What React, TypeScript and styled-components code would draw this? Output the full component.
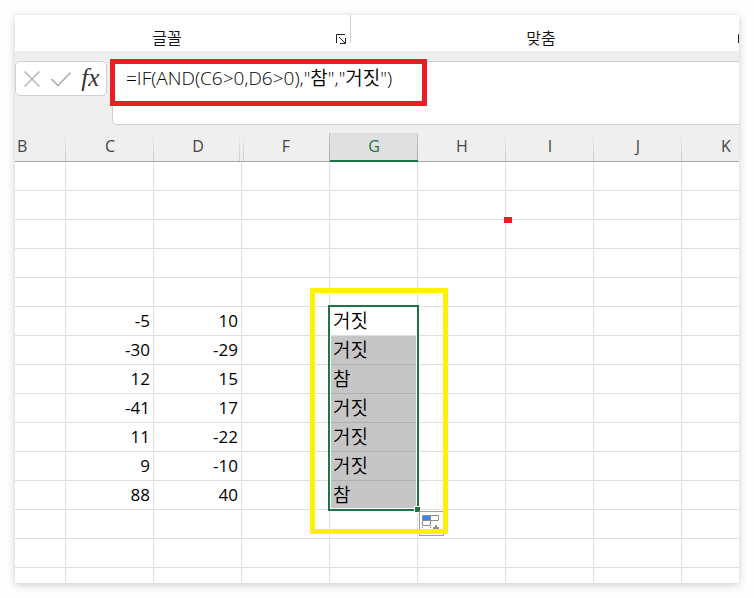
import React from "react";
import styled, { createGlobalStyle, css } from "styled-components";

const GlobalStyle = createGlobalStyle`
  * { box-sizing: border-box; }
  body {
    margin: 0;
    background: #fefefe;
    font-family: "Open Sans", "Noto Sans CJK KR", sans-serif;
    color: #222;
  }
`;

const Page = styled.main`
  padding: 15px;
`;

const Window = styled.div`
  overflow: hidden;
  background: #fff;
  border-radius: 2px;
  box-shadow: 0 2px 8px rgba(0, 0, 0, 0.2);
`;

const Ribbon = styled.div`
  display: flex;
  height: 36px;
  overflow: hidden;
`;

const RibbonGroup = styled.section<{ $fill?: boolean }>`
  display: flex;
  align-items: flex-end;
  height: 28px;
  ${(p) =>
    p.$fill
      ? css`
          flex: 1;
          padding-right: 7px;
          margin-right: -16px;
        `
      : css`
          flex: none;
          width: 336px;
          padding-right: 4px;
          border-right: 1px solid #d0d0d0;
        `}
`;

const GroupLabel = styled.h2<{ $inset: number }>`
  flex: 1;
  margin: 0;
  padding-right: ${(p) => p.$inset}px;
  color: #111;
  font-size: 16px;
  font-weight: 350;
  line-height: 10px;
  text-align: center;
`;

const Launcher = styled.button`
  display: block;
  width: 10px;
  height: 10px;
  margin-bottom: -1px;
  padding: 0;
  border: 0;
  background: none;

  svg { display: block; }
`;

const FormulaBar = styled.div`
  position: relative;
  display: flex;
  align-items: flex-start;
  gap: 5px;
  height: 82px;
  padding-top: 10px;
  background: #efefef;
`;

const FormulaTools = styled.div`
  display: flex;
  align-items: center;
  width: 92px;
  height: 35px;
  padding: 0 1px;
  border: 1px solid #d0d0d0;
  border-radius: 5px;
  background: #fff;
`;

const ToolButton = styled.button`
  display: flex;
  flex: 1;
  align-items: center;
  justify-content: center;
  height: 100%;
  padding: 0;
  border: 0;
  background: none;
`;

const FunctionMark = styled.span`
  padding-bottom: 3px;
  font: italic 400 25px/25px "Liberation Serif", serif;
  color: #333;
`;

const FormulaInput = styled.textarea`
  flex: 1;
  height: 64px;
  padding: 4px 13px;
  border: 1px solid #d0d0d0;
  border-right: 0;
  border-radius: 5px 0 0 5px;
  outline: 0;
  resize: none;
  background: #fff;
  color: #000;
  font: 350 19px/24px "Open Sans", "Noto Sans CJK KR", sans-serif;
`;

const FormulaFrame = styled.div`
  position: absolute;
  top: 8px;
  left: 95px;
  width: 317px;
  height: 47px;
  border: 5px solid #f01c24;
  pointer-events: none;
`;

const SheetView = styled.div`
  height: 450px;
  overflow: hidden;
`;

const Sheet = styled.table`
  width: 755px;
  table-layout: fixed;
  border-collapse: separate;
  border-spacing: 0;
`;

const Column = styled.col<{ $first?: boolean }>`
  width: ${(p) => (p.$first ? 51 : 88)}px;
`;

const fade = "linear-gradient(#efefef, #cacaca)";

const ColumnHead = styled.th<{ $mode: "plain" | "first" | "selected" | "beforeHidden" | "afterHidden" }>`
  height: 29px;
  padding: 0 0 2px;
  border-bottom: 1px solid #a6a6a6;
  background: ${fade} right / 1px 100% no-repeat #efefef;
  color: #444;
  font-size: 16px;
  font-weight: 400;
  line-height: 24px;
  text-align: center;
  ${(p) => p.$mode === "first" && css`
    padding-left: 2px;
    text-align: left;
  `}
  ${(p) => p.$mode === "beforeHidden" && css`
    background: ${fade} right 2px top / 1px 100% no-repeat #efefef;
  `}
  ${(p) => p.$mode === "afterHidden" && css`
    background:
      ${fade} 1px 0 / 1px 100% no-repeat,
      linear-gradient(#c6c6c6, #a6a6a6) right / 1px 100% no-repeat #efefef;
  `}
  ${(p) => p.$mode === "selected" && css`
    padding-bottom: 1px;
    border-bottom: 2px solid #217346;
    background: linear-gradient(#c6c6c6, #a6a6a6) right / 1px 100% no-repeat #e0e0e0;
    color: #217346;
  `}
`;

const Cell = styled.td<{ $kind: "text" | "number"; $shaded: boolean }>`
  position: relative;
  height: 29px;
  padding: 0 3px;
  border-right: 1px solid ${(p) => (p.$shaded ? "#e0e0e0" : "#dedede")};
  border-bottom: 1px solid ${(p) => (p.$shaded ? "#b0b0b0" : "#dedede")};
  background: ${(p) => (p.$shaded ? "#c6c6c6" : "#fff")};
  color: #000;
  font-size: ${(p) => (p.$kind === "text" ? 19 : 17)}px;
  font-weight: ${(p) => (p.$kind === "text" ? 350 : 400)};
  line-height: 28px;
  text-align: ${(p) => (p.$kind === "text" ? "left" : "right")};
  white-space: nowrap;
`;

const Selection = styled.div`
  position: absolute;
  z-index: 1;
  top: -2px;
  left: -2px;
  width: 91px;
  height: 206px;
  border: 2px solid #217346;
  box-shadow: inset 0 0 0 1px #fff;
  pointer-events: none;
`;

const FillHandle = styled.div`
  position: absolute;
  right: -4px;
  bottom: -4px;
  width: 7px;
  height: 7px;
  border: 1px solid #fff;
  background: #217346;
`;

const FillOptions = styled.button`
  position: absolute;
  z-index: 2;
  top: 204px;
  left: 89px;
  width: 25px;
  height: 25px;
  padding: 0;
  border: 1px solid #a0a0a0;
  background: #fff;

  svg { display: block; }
`;

const ResultFrame = styled.div`
  position: absolute;
  z-index: 3;
  top: -19px;
  left: -20px;
  width: 138px;
  height: 246px;
  border: 5px solid #fff200;
  pointer-events: none;
`;

const Marker = styled.div`
  position: absolute;
  z-index: 1;
  right: -7px;
  bottom: -4px;
  width: 8px;
  height: 6px;
  background: #f01c24;
`;

const LauncherIcon = () => (
  <svg width="10" height="10" viewBox="0 0 10 10" fill="none" stroke="#222">
    <path d="M.5 9V.5H9M3 3l6 6M9.500 4v5.500H4" />
  </svg>
);

const CancelIcon = () => (
  <svg width="16" height="16" viewBox="0 0 16 16" fill="none" stroke="#b0b0b0" strokeWidth="1.400">
    <path d="M.5.5l15 15M15.500.5l-15 15" />
  </svg>
);

const EnterIcon = () => (
  <svg width="20" height="16" viewBox="0 0 20 16" fill="none" stroke="#b0b0b0" strokeWidth="1.600">
    <path d="M.5 8l6.500 6.500L19.500 1.500" />
  </svg>
);

const FillOptionsIcon = () => (
  <svg width="23" height="23" viewBox="0 0 23 23" fill="none" stroke="#8c8c8c">
    <path d="M2.500 3.500h16v5h-16zM10.500 3.500v10h-8v-5" />
    <path d="M3 4h7v4H3z" fill="#3b82f6" stroke="none" />
    <path d="M2 15.500h1m7 0h1" />
    <path d="M16 13v6M13 16h6" strokeWidth="2" />
  </svg>
);

const letters = ["B", "C", "D", "F", "G", "H", "I", "J", "K"];
const headModes = {
  B: "first",
  D: "beforeHidden",
  F: "afterHidden",
  G: "selected",
} as const;

const firstDataRow = 5;
const data = [
  { C: "-5", D: "10", G: "거짓" },
  { C: "-30", D: "-29", G: "거짓" },
  { C: "12", D: "15", G: "참" },
  { C: "-41", D: "17", G: "거짓" },
  { C: "11", D: "-22", G: "거짓" },
  { C: "9", D: "-10", G: "거짓" },
  { C: "88", D: "40", G: "참" },
];
const rows = Array.from({ length: 15 }, (_, i) => i);

export default function App() {
  return (
    <>
      <GlobalStyle />
      <Page>
        <Window>
          <Ribbon>
            <RibbonGroup>
              <GroupLabel $inset={17}>글꼴</GroupLabel>
              <Launcher aria-label="글꼴 설정"><LauncherIcon /></Launcher>
            </RibbonGroup>
            <RibbonGroup $fill>
              <GroupLabel $inset={7}>맞춤</GroupLabel>
              <Launcher aria-label="맞춤 설정"><LauncherIcon /></Launcher>
            </RibbonGroup>
          </Ribbon>

          <FormulaBar>
            <FormulaTools>
              <ToolButton aria-label="취소"><CancelIcon /></ToolButton>
              <ToolButton aria-label="입력"><EnterIcon /></ToolButton>
              <ToolButton aria-label="함수 삽입"><FunctionMark>fx</FunctionMark></ToolButton>
            </FormulaTools>
            <FormulaInput
              aria-label="수식 입력줄"
              spellCheck={false}
              defaultValue={'=IF(AND(C6>0,D6>0),"참","거짓")'}
            />
            <FormulaFrame />
          </FormulaBar>

          <SheetView>
            <Sheet>
              <colgroup>
                {letters.map((l) => <Column key={l} $first={l === "B"} />)}
              </colgroup>
              <thead>
                <tr>
                  {letters.map((l) => (
                    <ColumnHead key={l} scope="col" $mode={headModes[l as keyof typeof headModes] ?? "plain"}>
                      {l}
                    </ColumnHead>
                  ))}
                </tr>
              </thead>
              <tbody>
                {rows.map((r) => {
                  const record = data[r - firstDataRow];
                  return (
                    <tr key={r}>
                      {letters.map((l) => (
                        <Cell
                          key={l}
                          $kind={l === "G" ? "text" : "number"}
                          $shaded={l === "G" && !!record && r > firstDataRow}
                        >
                          {record?.[l as keyof typeof record]}
                          {l === "H" && r === 1 && <Marker />}
                          {l === "G" && r === firstDataRow && (
                            <>
                              <Selection><FillHandle /></Selection>
                              <FillOptions aria-label="자동 채우기 옵션"><FillOptionsIcon /></FillOptions>
                              <ResultFrame />
                            </>
                          )}
                        </Cell>
                      ))}
                    </tr>
                  );
                })}
              </tbody>
            </Sheet>
          </SheetView>
        </Window>
      </Page>
    </>
  );
}
